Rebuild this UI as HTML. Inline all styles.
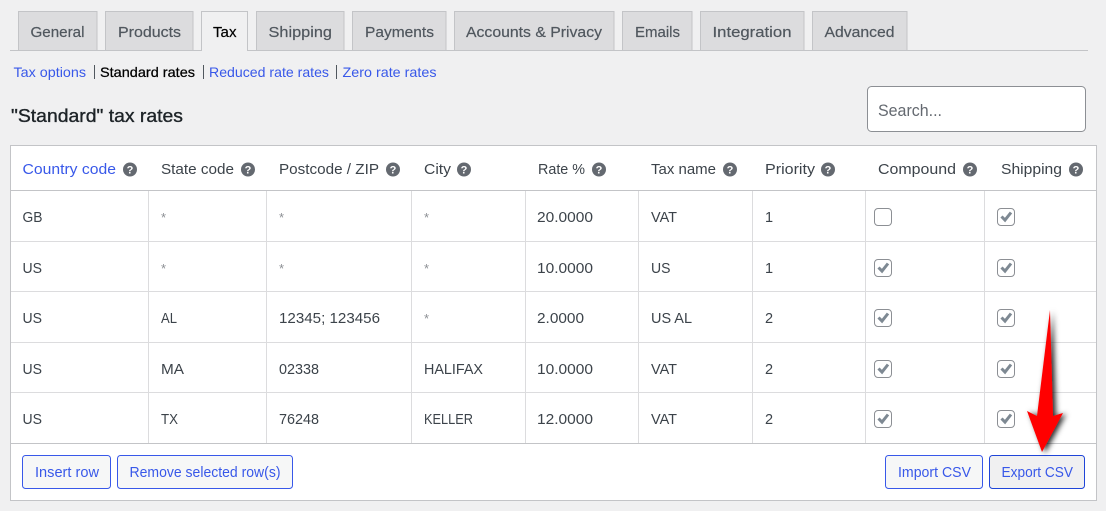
<!DOCTYPE html>
<html><head><meta charset="utf-8"><style>
html,body{margin:0;padding:0;background:#f0f0f1;width:1106px;height:511px;overflow:hidden}
svg{display:block}
text{font-family:"Liberation Sans",sans-serif;font-size:15px;fill:#2c3338}
.tb rect{fill:#dcdcde;stroke:#c3c4c7}
.tt text{fill:#50575e;font-size:15px;stroke:#50575e;stroke-width:.2}
.l{fill:#3858e9}
.h text{fill:#3c434a}
.r text{font-size:14.5px}
.r text.a{fill:#8c8f94;font-size:13px}
.q circle{fill:#646970}
.q text{fill:#fff;font-size:11px;font-weight:bold;text-anchor:middle}
.c rect{fill:#fff;stroke:#8c8f94}
.c path{fill:none;stroke:#7e8993;stroke-width:3}
.b rect{fill:#f6f7f7;stroke:#3858e9}
.b text{fill:#3858e9}
</style></head><body>
<svg width="1106" height="511" viewBox="0 0 1106 511" xmlns="http://www.w3.org/2000/svg">
<rect width="1106" height="511" fill="#f0f0f1"/>
<rect x="10" y="50" width="1078" height="1" fill="#c3c4c7"/>
<g class="tb">
<rect x="18.5" y="11.5" width="78.5" height="39"/>
<rect x="105.5" y="11.5" width="87.5" height="39"/>
<rect x="256.5" y="11.5" width="87.5" height="39"/>
<rect x="352.5" y="11.5" width="93.5" height="39"/>
<rect x="454.5" y="11.5" width="159.5" height="39"/>
<rect x="622.5" y="11.5" width="69.5" height="39"/>
<rect x="700.5" y="11.5" width="103.5" height="39"/>
<rect x="812.5" y="11.5" width="94.5" height="39"/>
</g>
<path d="M201.5 51V11.5H247.5V51" fill="#f0f0f1" stroke="#c3c4c7"/>
<rect x="202" y="50" width="45" height="2" fill="#f0f0f1"/>
<g class="tt">
<text x="30.5" y="37" textLength="54" lengthAdjust="spacingAndGlyphs">General</text>
<text x="118" y="37" textLength="63" lengthAdjust="spacingAndGlyphs">Products</text>
<text x="268.5" y="37" textLength="63.5" lengthAdjust="spacingAndGlyphs">Shipping</text>
<text x="365" y="37" textLength="69" lengthAdjust="spacingAndGlyphs">Payments</text>
<text x="466" y="37" textLength="136" lengthAdjust="spacingAndGlyphs">Accounts &amp; Privacy</text>
<text x="635" y="37" textLength="45" lengthAdjust="spacingAndGlyphs">Emails</text>
<text x="712.5" y="37" textLength="79" lengthAdjust="spacingAndGlyphs">Integration</text>
<text x="824.5" y="37" textLength="70" lengthAdjust="spacingAndGlyphs">Advanced</text>
</g>
<text x="213" y="37" textLength="23.5" lengthAdjust="spacingAndGlyphs" style="fill:#000;stroke:#000;stroke-width:.2">Tax</text>

<text class="l" x="13.5" y="77" textLength="72.5" lengthAdjust="spacingAndGlyphs" style="font-size:14px">Tax options</text>
<rect x="94" y="65" width="1" height="14" fill="#50575e"/>
<text x="100" y="77" textLength="95" lengthAdjust="spacingAndGlyphs" style="font-size:14px;fill:#000;stroke:#000;stroke-width:.25">Standard rates</text>
<rect x="203" y="65" width="1" height="14" fill="#50575e"/>
<text class="l" x="209" y="77" textLength="120" lengthAdjust="spacingAndGlyphs" style="font-size:14px">Reduced rate rates</text>
<rect x="336" y="65" width="1" height="14" fill="#50575e"/>
<text class="l" x="342.5" y="77" textLength="94" lengthAdjust="spacingAndGlyphs" style="font-size:14px">Zero rate rates</text>

<text x="11" y="122" textLength="172" lengthAdjust="spacingAndGlyphs" style="font-size:18px;fill:#1d2327;stroke:#1d2327;stroke-width:.35">"Standard" tax rates</text>

<rect x="867.5" y="86.5" width="218" height="45" rx="4" fill="#fff" stroke="#8c8f94"/>
<text x="878" y="116" textLength="64" lengthAdjust="spacingAndGlyphs" style="font-size:17px;fill:#646970">Search...</text>

<rect x="10.5" y="145.5" width="1086" height="355" fill="#fff" stroke="#c3c4c7"/>
<rect x="11" y="190" width="1085" height="1" fill="#c3c4c7"/>
<g fill="#dcdcde">
<rect x="11" y="241" width="1085" height="1"/>
<rect x="11" y="291" width="1085" height="1"/>
<rect x="11" y="342" width="1085" height="1"/>
<rect x="11" y="392" width="1085" height="1"/>
<rect x="148" y="191" width="1" height="252"/>
<rect x="266" y="191" width="1" height="252"/>
<rect x="411" y="191" width="1" height="252"/>
<rect x="525" y="191" width="1" height="252"/>
<rect x="638" y="191" width="1" height="252"/>
<rect x="752" y="191" width="1" height="252"/>
<rect x="865" y="191" width="1" height="252"/>
<rect x="984" y="191" width="1" height="252"/>
</g>
<rect x="11" y="443" width="1085" height="1" fill="#c3c4c7"/>

<text class="l" x="22.5" y="174" textLength="93.5" lengthAdjust="spacingAndGlyphs">Country code</text>
<g class="h">
<text x="161" y="174" textLength="73" lengthAdjust="spacingAndGlyphs">State code</text>
<text x="279" y="174" textLength="100" lengthAdjust="spacingAndGlyphs">Postcode / ZIP</text>
<text x="424" y="174" textLength="27" lengthAdjust="spacingAndGlyphs">City</text>
<text x="538" y="174" textLength="47" lengthAdjust="spacingAndGlyphs">Rate %</text>
<text x="651" y="174" textLength="65" lengthAdjust="spacingAndGlyphs">Tax name</text>
<text x="765" y="174" textLength="50" lengthAdjust="spacingAndGlyphs">Priority</text>
<text x="878" y="174" textLength="78" lengthAdjust="spacingAndGlyphs">Compound</text>
<text x="1001" y="174" textLength="61" lengthAdjust="spacingAndGlyphs">Shipping</text>
</g>
<g class="q">
<circle cx="130" cy="169.5" r="7"/><text x="130" y="173.5">?</text>
<circle cx="248" cy="169.5" r="7"/><text x="248" y="173.5">?</text>
<circle cx="393" cy="169.5" r="7"/><text x="393" y="173.5">?</text>
<circle cx="464" cy="169.5" r="7"/><text x="464" y="173.5">?</text>
<circle cx="599" cy="169.5" r="7"/><text x="599" y="173.5">?</text>
<circle cx="730" cy="169.5" r="7"/><text x="730" y="173.5">?</text>
<circle cx="828" cy="169.5" r="7"/><text x="828" y="173.5">?</text>
<circle cx="970" cy="169.5" r="7"/><text x="970" y="173.5">?</text>
<circle cx="1076" cy="169.5" r="7"/><text x="1076" y="173.5">?</text>
</g>

<g class="h r">
<text x="22.5" y="222" textLength="20" lengthAdjust="spacingAndGlyphs">GB</text>
<text class="a" x="161" y="222">*</text><text class="a" x="279" y="222">*</text><text class="a" x="424" y="222">*</text>
<text x="537" y="222" textLength="56" lengthAdjust="spacingAndGlyphs">20.0000</text>
<text x="651" y="222" textLength="26" lengthAdjust="spacingAndGlyphs">VAT</text>
<text x="765" y="222">1</text>

<text x="22.5" y="273" textLength="19.5" lengthAdjust="spacingAndGlyphs">US</text>
<text class="a" x="161" y="273">*</text><text class="a" x="279" y="273">*</text><text class="a" x="424" y="273">*</text>
<text x="537" y="273" textLength="56" lengthAdjust="spacingAndGlyphs">10.0000</text>
<text x="651" y="273" textLength="19.5" lengthAdjust="spacingAndGlyphs">US</text>
<text x="765" y="273">1</text>

<text x="22.5" y="323" textLength="19.5" lengthAdjust="spacingAndGlyphs">US</text>
<text x="161" y="323" textLength="16" lengthAdjust="spacingAndGlyphs">AL</text>
<text x="279" y="323" textLength="101" lengthAdjust="spacingAndGlyphs">12345; 123456</text>
<text class="a" x="424" y="323">*</text>
<text x="537" y="323" textLength="47" lengthAdjust="spacingAndGlyphs">2.0000</text>
<text x="651" y="323" textLength="41" lengthAdjust="spacingAndGlyphs">US AL</text>
<text x="765" y="323">2</text>

<text x="22.5" y="374" textLength="19.5" lengthAdjust="spacingAndGlyphs">US</text>
<text x="161" y="374" textLength="23" lengthAdjust="spacingAndGlyphs">MA</text>
<text x="279" y="374" textLength="40" lengthAdjust="spacingAndGlyphs">02338</text>
<text x="424" y="374" textLength="59" lengthAdjust="spacingAndGlyphs">HALIFAX</text>
<text x="537" y="374" textLength="56" lengthAdjust="spacingAndGlyphs">10.0000</text>
<text x="651" y="374" textLength="26" lengthAdjust="spacingAndGlyphs">VAT</text>
<text x="765" y="374">2</text>

<text x="22.5" y="424" textLength="19.5" lengthAdjust="spacingAndGlyphs">US</text>
<text x="161" y="424" textLength="17" lengthAdjust="spacingAndGlyphs">TX</text>
<text x="279" y="424" textLength="40" lengthAdjust="spacingAndGlyphs">76248</text>
<text x="424" y="424" textLength="49" lengthAdjust="spacingAndGlyphs">KELLER</text>
<text x="537" y="424" textLength="56" lengthAdjust="spacingAndGlyphs">12.0000</text>
<text x="651" y="424" textLength="26" lengthAdjust="spacingAndGlyphs">VAT</text>
<text x="765" y="424">2</text>
</g>

<g class="c">
<rect x="874.5" y="208.5" width="17" height="17" rx="3.5"/>
<rect x="997.5" y="208.5" width="17" height="17" rx="3.5"/><path d="M1001.5 216.5l3.5 3.6L1011 212.5"/>
<rect x="874.5" y="259.5" width="17" height="17" rx="3.5"/><path d="M878.5 267.5l3.5 3.6L888 263.5"/>
<rect x="997.5" y="259.5" width="17" height="17" rx="3.5"/><path d="M1001.5 267.5l3.5 3.6L1011 263.5"/>
<rect x="874.5" y="309.5" width="17" height="17" rx="3.5"/><path d="M878.5 317.5l3.5 3.6L888 313.5"/>
<rect x="997.5" y="309.5" width="17" height="17" rx="3.5"/><path d="M1001.5 317.5l3.5 3.6L1011 313.5"/>
<rect x="874.5" y="360.5" width="17" height="17" rx="3.5"/><path d="M878.5 368.5l3.5 3.6L888 364.5"/>
<rect x="997.5" y="360.5" width="17" height="17" rx="3.5"/><path d="M1001.5 368.5l3.5 3.6L1011 364.5"/>
<rect x="874.5" y="410.5" width="17" height="17" rx="3.5"/><path d="M878.5 418.5l3.5 3.6L888 414.5"/>
<rect x="997.5" y="410.5" width="17" height="17" rx="3.5"/><path d="M1001.5 418.5l3.5 3.6L1011 414.5"/>
</g>

<g class="b">
<rect x="22.5" y="455.5" width="88" height="33" rx="3"/>
<text x="35" y="477" textLength="64" lengthAdjust="spacingAndGlyphs">Insert row</text>
<rect x="117.5" y="455.5" width="175" height="33" rx="3"/>
<text x="129.5" y="477" textLength="151" lengthAdjust="spacingAndGlyphs">Remove selected row(s)</text>
<rect x="885.5" y="455.5" width="97" height="33" rx="3"/>
<text x="898" y="477" textLength="73" lengthAdjust="spacingAndGlyphs">Import CSV</text>
<rect x="989.5" y="455.5" width="95" height="33" rx="3" style="fill:#f0f0f1;stroke:#1f45d8"/>
<text x="1001.5" y="477" textLength="71.5" lengthAdjust="spacingAndGlyphs">Export CSV</text>
</g>

<defs><filter id="s" x="-80%" y="-20%" width="260%" height="140%"><feDropShadow dx="3" dy="1" stdDeviation="3" flood-color="#000" flood-opacity=".85"/></filter></defs>
<path d="M1050 310L1053 416L1063 413L1042 452L1027 411L1037 416Z" fill="#f00" filter="url(#s)"/>
</svg>
</body></html>
